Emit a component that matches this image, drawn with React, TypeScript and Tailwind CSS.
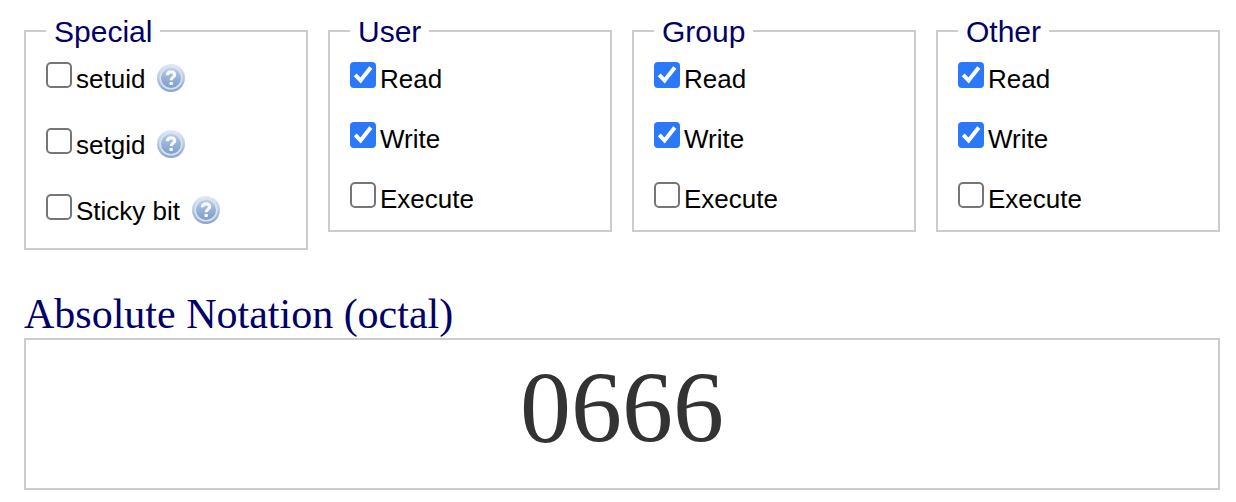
import { useId, useState } from "react";
import clsx from "clsx";

type Permission = { name: string; bit: number; help?: string };
type Group = { title: string; items: Permission[] };

const access: Permission[] = [
  { name: "Read", bit: 4 },
  { name: "Write", bit: 2 },
  { name: "Execute", bit: 1 },
];

const groups: Group[] = [
  {
    title: "Special",
    items: [
      { name: "setuid", bit: 4, help: "About setuid" },
      { name: "setgid", bit: 2, help: "About setgid" },
      { name: "Sticky bit", bit: 1, help: "About the sticky bit" },
    ],
  },
  { title: "User", items: access },
  { title: "Group", items: access },
  { title: "Other", items: access },
];

function HelpIcon() {
  const gradient = useId();
  return (
    <svg viewBox="0 0 28 28" className="block size-7" aria-hidden="true">
      <defs>
        <linearGradient id={gradient} x1="0" y1="0" x2="0" y2="1">
          <stop offset="0" stopColor="#bdd0e8" />
          <stop offset="0.5" stopColor="#98b1d6" />
          <stop offset="1" stopColor="#7f9dc9" />
        </linearGradient>
        <linearGradient id={gradient + "ring"} x1="0" y1="0" x2="0" y2="1">
          <stop offset="0" stopColor="#e2ebf6" />
          <stop offset="0.5" stopColor="#b7cae3" />
          <stop offset="1" stopColor="#86a4ce" />
        </linearGradient>
      </defs>
      <circle cx="14" cy="14" r="14" fill={`url(#${gradient}ring)`} />
      <circle cx="14" cy="14" r="10.8" fill={`url(#${gradient})`} stroke="#d6e2f0" strokeWidth="1.6" />
      <path
        d="M10.4 11.2C10.5 8.9 12 7.9 14.1 7.9C16.2 7.9 17.6 9 17.6 10.8C17.6 13.4 14.2 13.3 14.2 16.2"
        fill="none"
        stroke="#f6f9fd"
        strokeWidth="3.2"
      />
      <rect x="12.4" y="18" width="3.5" height="3" rx="0.7" fill="#f6f9fd" />
    </svg>
  );
}

function PermissionRow({
  id,
  item,
  checked,
  onToggle,
}: {
  id: string;
  item: Permission;
  checked: boolean;
  onToggle: () => void;
}) {
  return (
    <div className="flex items-baseline">
      <span className="relative mr-1 inline-grid">
        <input
          id={id}
          type="checkbox"
          checked={checked}
          onChange={onToggle}
          className="peer size-[26px] appearance-none rounded-[5px] border-2 border-[#767676] bg-white checked:rounded-[4px] checked:border-[#2b78f8] checked:bg-[#2b78f8]"
        />
        <svg
          viewBox="0 0 26 26"
          className="pointer-events-none absolute inset-0 hidden size-full peer-checked:block"
          aria-hidden="true"
        >
          <path d="M5.2 12.8L10.6 18.4L20.8 5.4" fill="none" stroke="#fff" strokeWidth="4" />
        </svg>
      </span>
      <label htmlFor={id} className="text-[26px] leading-[30px] text-black">
        {item.name}
      </label>
      {item.help && (
        <button type="button" aria-label={item.help} className="ml-3 self-center">
          <HelpIcon />
        </button>
      )}
    </div>
  );
}

export default function App() {
  const [modes, setModes] = useState([0, 6, 6, 6]);

  const toggle = (group: number, bit: number) =>
    setModes((current) => current.map((mode, i) => (i === group ? mode ^ bit : mode)));

  return (
    <main className="bg-white pt-[14px] pr-4 pb-3 pl-6 font-['Liberation_Sans',Arial,sans-serif]">
      <div className="grid grid-cols-4 items-start gap-5">
        {groups.map((group, g) => (
          <fieldset
            key={group.title}
            className={clsx(
              "min-w-0 border-2 border-[#ccc] px-5 pt-[14px]",
              g === 0 ? "pb-[22px]" : "pb-4",
            )}
          >
            <legend className="px-2 pt-0.5 text-[30px] leading-8 text-[#000066]">{group.title}</legend>
            <div className={clsx("flex flex-col", g === 0 ? "gap-[34px]" : "gap-7")}>
              {group.items.map((item) => (
                <PermissionRow
                  key={item.name}
                  id={`${group.title}-${item.bit}`}
                  item={item}
                  checked={(modes[g] & item.bit) !== 0}
                  onToggle={() => toggle(g, item.bit)}
                />
              ))}
            </div>
          </fieldset>
        ))}
      </div>

      <div className="mt-11 font-['Liberation_Serif',Georgia,serif]">
        <label htmlFor="octal" className="block pb-1 text-[42px] leading-10 text-[#000066]">
          Absolute Notation (octal)
        </label>
        <input
          id="octal"
          type="text"
          readOnly
          value={modes.join("")}
          className="block w-full border-2 border-[#ccc] bg-white pt-2.5 pb-[22px] text-center text-[102px] leading-[116px] text-[#333] outline-none"
        />
      </div>
    </main>
  );
}
